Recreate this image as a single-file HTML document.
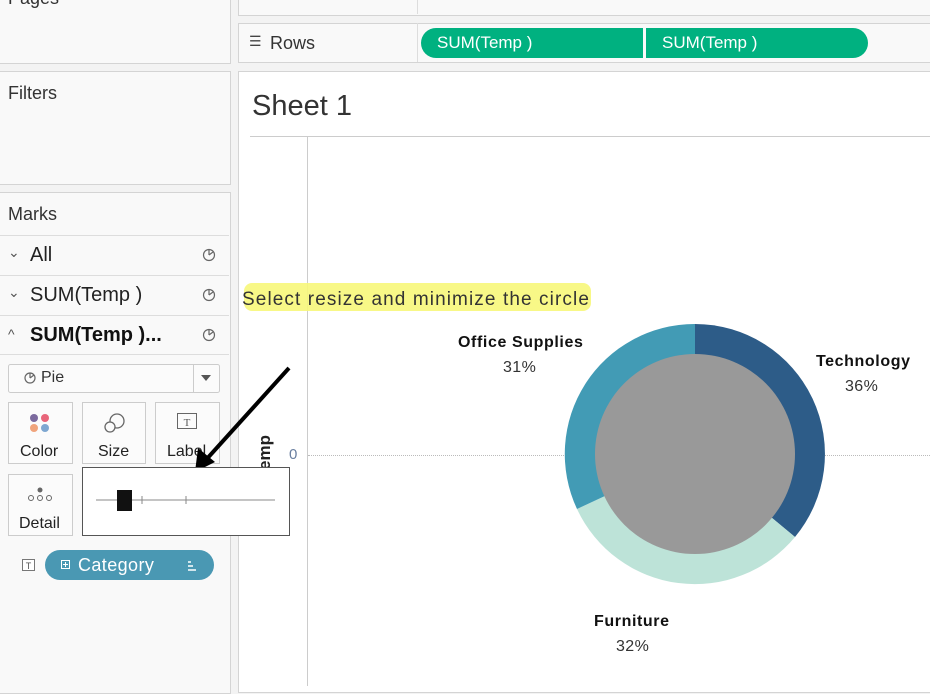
<!DOCTYPE html>
<html><head><style>
body{margin:0;width:930px;height:685px;overflow:hidden;background:#f3f3f3;font-family:"Liberation Sans",sans-serif;position:relative}
.a{position:absolute}
.pane{background:#f9f9f9;border:1px solid #d4d4d4}
.t{color:#333;font-size:18px}
</style></head><body>
<div class="a pane" style="left:-1px;top:-2px;width:230px;height:64px"></div>
<div class="a t" style="left:8px;top:-12px">Pages</div>
<div class="a pane" style="left:-1px;top:71px;width:230px;height:112px"></div>
<div class="a t" style="left:8px;top:83px">Filters</div>
<div class="a pane" style="left:-1px;top:192px;width:230px;height:500px"></div>
<div class="a t" style="left:8px;top:204px">Marks</div>
<div class="a" style="left:0;top:235px;width:229px;border-top:1px solid #ddd"></div>
<div class="a" style="left:0;top:275px;width:229px;border-top:1px solid #ddd"></div>
<div class="a" style="left:0;top:315px;width:229px;border-top:1px solid #ddd"></div>
<div class="a" style="left:0;top:354px;width:229px;border-top:1px solid #ddd"></div>
<div class="a" style="left:8px;top:244px;font-size:14px;color:#555">⌄</div>
<div class="a" style="left:30px;top:244px;font-size:20px;color:#222">All</div>
<div class="a" style="left:8px;top:284px;font-size:14px;color:#555">⌄</div>
<div class="a" style="left:30px;top:284px;font-size:20px;color:#222">SUM(Temp )</div>
<div class="a" style="left:8px;top:326px;font-size:14px;color:#555">^</div>
<div class="a" style="left:30px;top:324px;font-size:20px;color:#111;font-weight:bold">SUM(Temp )...</div>
<svg class="a" style="left:0;top:0" width="230" height="685">
<rect x="8.5" y="364.5" width="211" height="28" fill="#fbfbfb" stroke="#ccc" rx="2"/>
<line x1="193.5" y1="365" x2="193.5" y2="392" stroke="#ccc"/>
<path d="M201 375h10l-5 6z" fill="#555"/>
<g fill="none" stroke="#666" stroke-width="1.2">
<circle cx="209" cy="255" r="5.5"/><path d="M209 255V249.5M209 255L213 252"/>
<circle cx="209" cy="295" r="5.5"/><path d="M209 295V289.5M209 295L213 292"/>
<circle cx="209" cy="335" r="5.5"/><path d="M209 335V329.5M209 335L213 332"/>
<circle cx="30" cy="378" r="5"/><path d="M30 378V373M30 378L34 375"/>
</g>
<rect x="8.5" y="402.5" width="64" height="61" fill="#fbfbfb" stroke="#ccc"/>
<rect x="82.5" y="402.5" width="63" height="61" fill="#fbfbfb" stroke="#ccc"/>
<rect x="155.5" y="402.5" width="64" height="61" fill="#fbfbfb" stroke="#ccc"/>
<rect x="8.5" y="474.5" width="64" height="61" fill="#fbfbfb" stroke="#ccc"/>
<circle cx="34" cy="418" r="4" fill="#7b6a9e"/><circle cx="45" cy="418" r="4" fill="#e8657a"/>
<circle cx="34" cy="428" r="4" fill="#f0a47c"/><circle cx="45" cy="428" r="4" fill="#7ea7d1"/>
<circle cx="117" cy="421" r="7" fill="none" stroke="#666" stroke-width="1.3"/>
<circle cx="110" cy="427" r="5" fill="#fbfbfb" stroke="#666" stroke-width="1.3"/>
<rect x="177.5" y="413.5" width="19" height="15" fill="none" stroke="#666"/>
<text x="187" y="426" font-size="11" text-anchor="middle" fill="#555" font-family="Liberation Serif">T</text>
<circle cx="40" cy="490" r="2.5" fill="#666"/>
<g fill="none" stroke="#666"><circle cx="31" cy="498" r="2.5"/><circle cx="40" cy="498" r="2.5"/><circle cx="49" cy="498" r="2.5"/></g>
<rect x="22.5" y="559.5" width="12" height="11" fill="#fff" stroke="#777"/>
<text x="28.5" y="569" font-size="9" text-anchor="middle" fill="#555">T</text>
<rect x="45" y="550" width="169" height="30" rx="15" fill="#4a98b3"/>
<rect x="61.5" y="560.5" width="8" height="8" fill="none" stroke="#fff"/><path d="M65.5 562v5M63 564.5h5" stroke="#fff"/>
<path d="M188 562h3M188 566h5M188 570h8" stroke="#fff" stroke-width="1.5"/>
</svg>
<div class="a" style="left:20px;top:443px;font-size:16px;color:#222">Color</div>
<div class="a" style="left:98px;top:443px;font-size:16px;color:#222">Size</div>
<div class="a" style="left:167px;top:443px;font-size:16px;color:#222">Label</div>
<div class="a" style="left:19px;top:515px;font-size:16px;color:#222">Detail</div>
<div class="a" style="left:41px;top:369px;font-size:16px;color:#333">Pie</div>
<div class="a" style="left:78px;top:555px;font-size:18px;color:#fff;letter-spacing:0.4px">Category</div>

<div class="a pane" style="left:238px;top:-2px;width:700px;height:16px;background:#f9f9f9"></div>
<div class="a" style="left:417px;top:-2px;height:16px;border-left:1px solid #ddd"></div>
<div class="a pane" style="left:238px;top:23px;width:700px;height:38px"></div>
<div class="a" style="left:417px;top:23px;height:39px;border-left:1px solid #ddd"></div>
<div class="a" style="left:249px;top:33px;font-size:14px;color:#444">☰</div>
<div class="a" style="left:270px;top:33px;font-size:18px;color:#333">Rows</div>
<div class="a" style="left:421px;top:28px;width:222px;height:30px;background:#00b180;border-radius:15px 0 0 15px"></div>
<div class="a" style="left:646px;top:28px;width:222px;height:30px;background:#00b180;border-radius:0 15px 15px 0"></div>
<div class="a" style="left:437px;top:33px;font-size:17px;color:#fff">SUM(Temp )</div>
<div class="a" style="left:662px;top:33px;font-size:17px;color:#fff">SUM(Temp )</div>
<div class="a" style="left:238px;top:71px;width:700px;height:620px;background:#fff;border:1px solid #d4d4d4"></div>
<div class="a" style="left:252px;top:90px;font-size:29px;color:#333;font-weight:300">Sheet 1</div>
<div class="a" style="left:250px;top:136px;width:680px;border-top:1px solid #ccc"></div>
<div class="a" style="left:307px;top:136px;height:550px;border-left:1px solid #ccc"></div>
<div class="a" style="left:308px;top:455px;width:622px;border-top:1px dotted #bbb"></div>
<div class="a" style="left:289px;top:446px;font-size:15px;color:#6a7fa0">0</div>
<div class="a" style="left:255px;top:470px;font-size:17px;font-weight:bold;color:#222;transform:rotate(-90deg);transform-origin:left top">emp</div>
<div class="a" style="left:244px;top:283px;width:347px;height:28px;background:#f7f77a;border-radius:8px;opacity:.9"></div>
<div class="a" style="left:242px;top:289px;font-size:19px;color:#333;letter-spacing:1.1px">Select resize and minimize the circle</div>
<svg class="a" style="left:0;top:0" width="930" height="685">
<path d="M695 454L695 324A130 130 0 0 1 795 537Z" fill="#2d5c88"/>
<path d="M695 454L795 537A130 130 0 0 1 577 509Z" fill="#bde3d8"/>
<path d="M695 454L577 509A130 130 0 0 1 695 324Z" fill="#429bb5"/>
<circle cx="695" cy="454" r="100" fill="#999"/>
<line x1="289" y1="368" x2="204" y2="462" stroke="#000" stroke-width="4"/>
<path d="M195 472L198 448L215 462Z" fill="#000"/>
<rect x="82.5" y="467.5" width="207" height="68" fill="#fff" stroke="#555"/>
<line x1="96" y1="500" x2="275" y2="500" stroke="#888"/>
<line x1="142" y1="496" x2="142" y2="504" stroke="#888"/><line x1="186" y1="496" x2="186" y2="504" stroke="#888"/>
<rect x="117" y="490" width="15" height="21" fill="#111"/>
</svg>
<div class="a" style="left:458px;top:334px;font-size:16px;font-weight:bold;color:#111;letter-spacing:0.6px">Office Supplies</div>
<div class="a" style="left:503px;top:359px;font-size:16px;color:#333;letter-spacing:0.4px">31%</div>
<div class="a" style="left:816px;top:353px;font-size:16px;font-weight:bold;color:#111;letter-spacing:0.6px">Technology</div>
<div class="a" style="left:845px;top:378px;font-size:16px;color:#333;letter-spacing:0.4px">36%</div>
<div class="a" style="left:594px;top:613px;font-size:16px;font-weight:bold;color:#111;letter-spacing:0.6px">Furniture</div>
<div class="a" style="left:616px;top:638px;font-size:16px;color:#333;letter-spacing:0.4px">32%</div>
</body></html>
